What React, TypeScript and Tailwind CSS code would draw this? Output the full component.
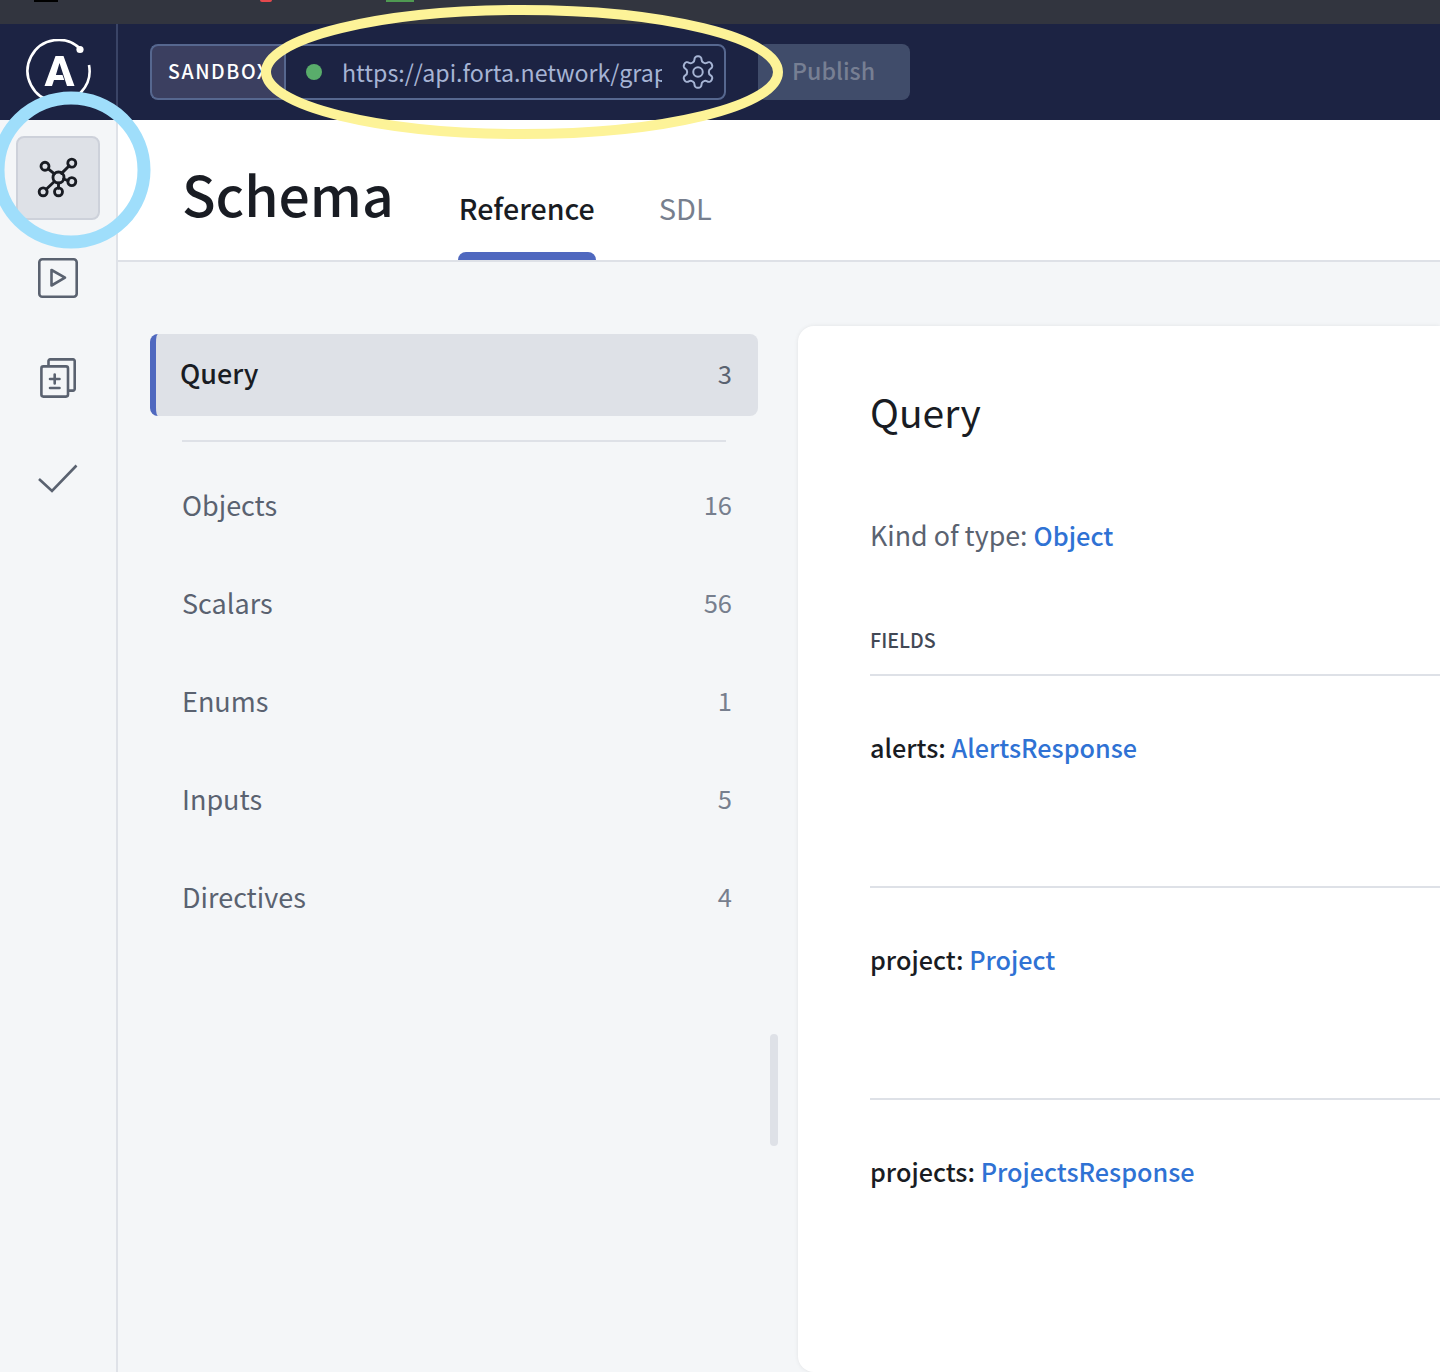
const FONT = "font-['Noto_Sans_CJK_JP','Noto_Sans',sans-serif]";

const TYPES = [
  { label: "Objects", count: 16 },
  { label: "Scalars", count: 56 },
  { label: "Enums", count: 1 },
  { label: "Inputs", count: 5 },
  { label: "Directives", count: 4 },
];

const FIELDS = [
  { name: "alerts", type: "AlertsResponse" },
  { name: "project", type: "Project" },
  { name: "projects", type: "ProjectsResponse" },
];

function ApolloLogo() {
  return (
    <svg width="66" height="66" viewBox="0 0 66 66" fill="none">
      <path d="M55 10.500A31 31 0 1 0 63 26" stroke="#fff" strokeWidth="2.6" />
      <circle cx="54" cy="10.500" r="3.6" fill="#fff" />
      <path d="M26 47h-7.500l11-30h8l11 30H41l-7.500-23-3.600 12h6.600l1.800 5H28z" fill="#fff" />
    </svg>
  );
}

function SchemaIcon() {
  return (
    <svg width="45" height="45" viewBox="0 0 44 44" fill="none" stroke="#191c23" strokeWidth="2.8" strokeLinecap="round">
      <circle cx="22" cy="21" r="5.4" />
      <circle cx="8.800" cy="10" r="3.9" />
      <circle cx="35" cy="7" r="3.9" />
      <circle cx="35" cy="25" r="3.9" />
      <circle cx="7" cy="35" r="3.9" />
      <circle cx="22" cy="35" r="3.9" />
      <path d="M12 12.500l6 5M25 17l7.500-7.500M27 22.500l4.500 1.500M18 25L10 32.500M22 26.500v5" />
    </svg>
  );
}

function PlayIcon() {
  return (
    <svg width="40" height="40" viewBox="0 0 40 40" fill="none" stroke="#5a6270" strokeWidth="2.6" strokeLinejoin="round">
      <rect x="1.3" y="1.3" width="37.4" height="37.4" rx="3" />
      <path d="M13.500 12v15.500L27 19.700z" />
    </svg>
  );
}

function DiffIcon() {
  return (
    <svg width="36" height="40" viewBox="0 0 36 40" fill="none" stroke="#5a6270" strokeWidth="2.6" strokeLinejoin="round">
      <path d="M8.500 7.500V3a1.600 1.600 0 0 1 1.600-1.600h23a1.600 1.600 0 0 1 1.600 1.600v28a1.600 1.600 0 0 1-1.600 1.600H29" />
      <rect x="1.400" y="8.400" width="26.600" height="30.200" rx="2" />
      <path d="M14.700 16.500v9M10 21h9.500M10 30h9.500" strokeLinecap="round" />
    </svg>
  );
}

function CheckIcon() {
  return (
    <svg width="40" height="30" viewBox="0 0 40 30" fill="none" stroke="#5a6270" strokeWidth="2.6">
      <path d="M1 15l13 12L38.500 1.500" />
    </svg>
  );
}

function GearIcon() {
  return (
    <svg width="38" height="38" viewBox="0 0 24 24" fill="none" stroke="#a6b4d4" strokeWidth="1.25" strokeLinecap="round" strokeLinejoin="round">
      <path d="M12.220 2h-.44a2 2 0 0 0-2 2v.18a2 2 0 0 1-1 1.730l-.43.25a2 2 0 0 1-2 0l-.15-.08a2 2 0 0 0-2.730.73l-.22.38a2 2 0 0 0 .73 2.730l.15.1a2 2 0 0 1 1 1.720v.51a2 2 0 0 1-1 1.740l-.15.09a2 2 0 0 0-.73 2.730l.22.38a2 2 0 0 0 2.730.73l.15-.08a2 2 0 0 1 2 0l.43.25a2 2 0 0 1 1 1.730V20a2 2 0 0 0 2 2h.44a2 2 0 0 0 2-2v-.18a2 2 0 0 1 1-1.730l.43-.25a2 2 0 0 1 2 0l.15.08a2 2 0 0 0 2.730-.73l.22-.39a2 2 0 0 0-.73-2.730l-.15-.08a2 2 0 0 1-1-1.740v-.5a2 2 0 0 1 1-1.740l.15-.09a2 2 0 0 0 .73-2.730l-.22-.38a2 2 0 0 0-2.730-.73l-.15.08a2 2 0 0 1-2 0l-.43-.25a2 2 0 0 1-1-1.730V4a2 2 0 0 0-2-2z" />
      <circle cx="12" cy="12" r="3" />
    </svg>
  );
}

export default function App() {
  return (
    <div className={`relative w-[1440px] h-[1372px] overflow-hidden bg-[#f4f6f8] ${FONT}`}>
      {/* Strip of the window above the app */}
      <div className="relative h-6 bg-[#32353f]">
        <div className="absolute left-[34px] top-0 w-6 h-[2px] bg-black" />
        <div className="absolute left-[260px] top-0 w-3 h-[2px] rounded-b-full bg-[#e5484d]" />
        <div className="absolute left-[386px] top-0 w-[28px] h-[2px] bg-[#4f9a52]" />
      </div>

      <div className="flex h-[1348px]">
        {/* Left rail */}
        <aside className="w-[118px] shrink-0 flex flex-col border-r-2 border-[#dfe2e8]">
          <div className="h-24 shrink-0 bg-[#1c2343] border-r-2 border-[#3a4466] -mr-[2px] flex items-center justify-center pl-[2px]">
            <ApolloLogo />
          </div>
          <div className="flex flex-col items-center pt-4">
            <div className="w-[84px] h-[84px] rounded-lg bg-[#dee1e7] border-2 border-[#cdd1da] flex items-center justify-center">
              <SchemaIcon />
            </div>
            <div className="mt-[38px] h-10 flex items-center justify-center"><PlayIcon /></div>
            <div className="mt-[60px] h-10 flex items-center justify-center"><DiffIcon /></div>
            <div className="mt-[66px] h-[30px] flex items-center justify-center"><CheckIcon /></div>
          </div>
        </aside>

        <div className="flex-1 min-w-0 flex flex-col">
          {/* Top bar */}
          <header className="h-24 shrink-0 bg-[#1c2343] flex items-center pl-8">
            <div className="h-[56px] w-[134px] rounded-l-lg bg-[#3b3f60] border-2 border-r-0 border-[#56678f] flex items-center pl-4 pb-[3px] text-[19.500px] leading-none font-medium tracking-[1.600px] text-white overflow-hidden whitespace-nowrap">
              SANDBOX
            </div>
            <div className="h-[56px] w-[442px] rounded-r-lg border-2 border-[#56678f] flex items-center pl-[20px]">
              <span className="w-4 h-4 rounded-full bg-[#59ad6b] shrink-0" />
              <span className="ml-5 w-[320px] overflow-hidden whitespace-nowrap text-[23.200px] leading-[36px] text-[#a6b4d4]">https://api.forta.network/graphql</span>
              <span className="ml-[17px]"><GearIcon /></span>
            </div>
            <div className="ml-8 h-[56px] w-[152px] rounded-lg bg-[#404c6a] flex items-center pl-[34px] pb-[2px] text-[23.200px] leading-none font-medium text-[#777f93]">
              Publish
            </div>
          </header>

          {/* Page title and tabs */}
          <div className="h-[142px] shrink-0 bg-white border-b-2 border-[#dee1e7] flex pl-[64px]">
            <h1 className="mt-[41px] text-[55.300px] leading-[64px] font-medium text-[#191c23]">Schema</h1>
            <div className="ml-[64px] w-[138px] flex flex-col items-center">
              <span className="mt-[70px] text-[28.600px] leading-[36px] font-medium text-[#191c23]">Reference</span>
              <span className="mt-auto w-full h-2 rounded-t-lg bg-[#4f68bf]" />
            </div>
            <span className="ml-[63px] mt-[69px] text-[29px] leading-[36px] text-[#777f8e]">SDL</span>
          </div>

          <div className="flex-1 min-h-0 flex">
            {/* Type list */}
            <nav className="w-[640px] shrink-0 pl-8 pt-[72px] relative">
              <div className="h-[82px] rounded-lg bg-[#dee1e7] border-l-[6px] border-[#4f68bf] flex items-center justify-between pl-6 pr-[26px] pb-[5px]">
                <span className="text-[26.900px] leading-none font-medium text-[#191c23] pt-[1px]">Query</span>
                <span className="text-[25.500px] leading-none text-[#5a6270]">3</span>
              </div>
              <div className="mt-6 mx-8 h-[2px] bg-[#dee1e7]" />
              <ul className="mt-4">
                {TYPES.map((t) => (
                  <li key={t.label} className="h-[98px] flex items-center justify-between pl-8 pr-[26px] pb-[6px]">
                    <span className="text-[27px] leading-none text-[#5a6270]">{t.label}</span>
                    <span className="text-[25.500px] leading-none text-[#777f8e]">{t.count}</span>
                  </li>
                ))}
              </ul>
              <div className="absolute left-[652px] top-[772px] w-2 h-[112px] rounded-full bg-[#dee1e7]" />
            </nav>

            {/* Detail card */}
            <section className="flex-1 min-w-0 mt-[64px] ml-[40px] bg-white rounded-l-2xl shadow-[0_0_4px_rgba(18,21,26,0.08)] pl-[72px]">
              <h2 className="mt-[61px] text-[39px] leading-[48px] text-[#191c23]">Query</h2>
              <p className="mt-[80px] text-[26.800px] leading-[40px] text-[#5a6270]">
                Kind of type: <span className="text-[25.400px] font-medium text-[#2f72d4]">Object</span>
              </p>
              <div className="mt-[73px] text-[19.700px] leading-6 font-medium text-[#424855] pb-[22px] border-b-2 border-[#dee1e7]">FIELDS</div>
              {FIELDS.map((f, i) => (
                <div key={f.name} className={`h-[212px] pt-[53px] text-[25.200px] leading-9 ${i < 2 ? "border-b-2 border-[#dee1e7]" : ""}`}>
                  <span className="font-medium text-[#191c23]">{f.name}: </span>
                  <span className="font-medium text-[#2f72d4]">{f.type}</span>
                </div>
              ))}
            </section>
          </div>
        </div>
      </div>

      {/* Highlight rings drawn over the screenshot */}
      <svg className="absolute left-0 top-0 pointer-events-none" width="1440" height="1372" fill="none">
        <ellipse cx="71" cy="170" rx="73" ry="72" stroke="#9fdefb" strokeWidth="13" />
        <ellipse cx="522" cy="72" rx="256" ry="62" stroke="#fdf398" strokeWidth="10" />
      </svg>
    </div>
  );
}
